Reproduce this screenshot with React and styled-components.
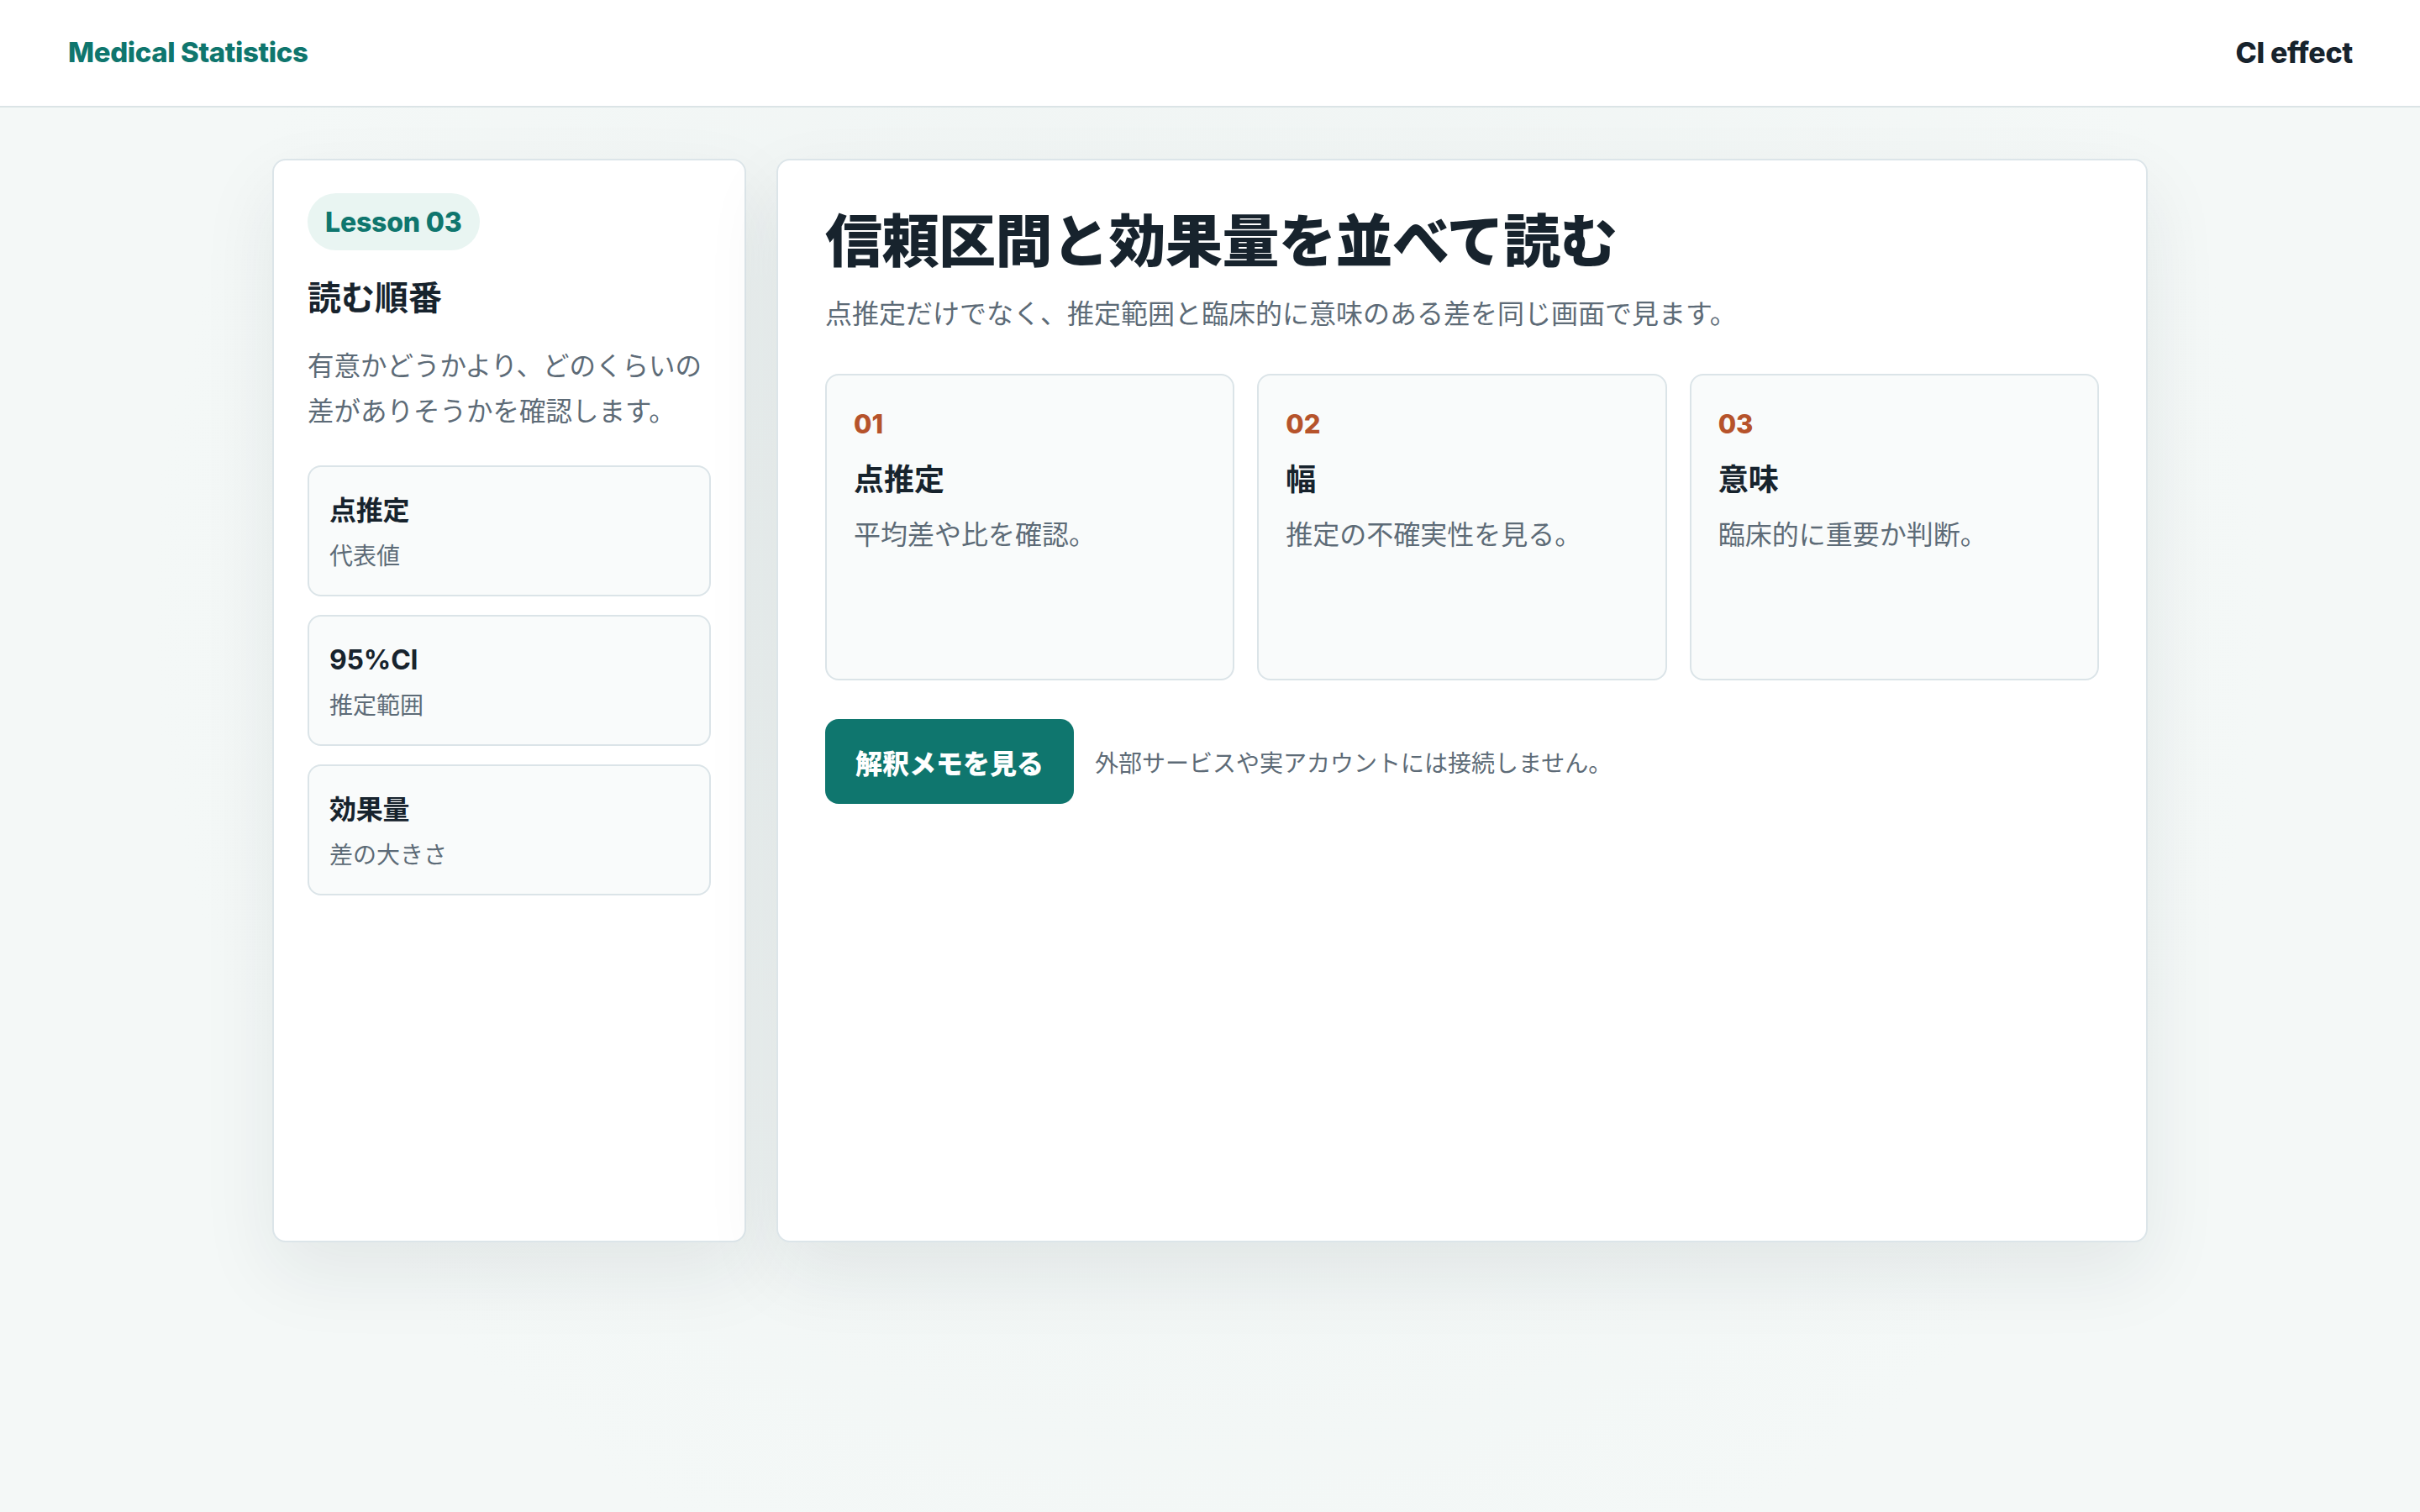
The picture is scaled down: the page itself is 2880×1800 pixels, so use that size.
import React from "react";
import styled, { createGlobalStyle } from "styled-components";

const GlobalStyle = createGlobalStyle`
  * {
    box-sizing: border-box;
  }
  body {
    margin: 0;
    background: #f4f8f7;
    color: #17232d;
    font-family: Inter, "Noto Sans CJK JP", sans-serif;
  }
`;

const Page = styled.div`
  min-height: 1800px;
  background: radial-gradient(circle at 50% 40%, #eef3f2 0%, #f4f8f7 70%);
`;

const Header = styled.header`
  height: 128px;
  display: flex;
  align-items: center;
  justify-content: space-between;
  padding: 0 80px 2px 81px;
  background: #ffffff;
  border-bottom: 2px solid #dbe4e6;
`;

const Brand = styled.div`
  font-size: 33px;
  font-weight: 800;
  color: #0f766e;
  letter-spacing: -0.4px;
`;

const HeaderTag = styled.div`
  font-size: 34px;
  font-weight: 800;
  color: #17232d;
  letter-spacing: -0.3px;
`;

const Layout = styled.main`
  max-width: 2232px;
  margin: 0 auto;
  padding-top: 61px;
  display: grid;
  grid-template-columns: 564px 1fr;
  gap: 36px;
`;

const Panel = styled.section`
  min-height: 1290px;
  background: #ffffff;
  border: 2px solid #dce5e9;
  border-radius: 16px;
  box-shadow: 0 36px 90px rgba(22, 40, 50, 0.08);
  padding: ${(p) => p.$pad};
`;

const Badge = styled.span`
  display: inline-flex;
  align-items: center;
  height: 68px;
  padding: 0 21px;
  border-radius: 34px;
  background: #e9f5f2;
  color: #0f766e;
  font-size: 32px;
  font-weight: 800;
  letter-spacing: -0.2px;
`;

const SideTitle = styled.h2`
  margin: 31px 0 0;
  font-size: 40px;
  line-height: 52px;
  font-weight: 700;
`;

const SideText = styled.p`
  margin: 28px 0 0;
  font-size: 31.5px;
  line-height: 54px;
  color: #5d6b77;
`;

const StackList = styled.div`
  margin-top: 37px;
  display: flex;
  flex-direction: column;
  gap: 22px;
`;

const StackItem = styled.div`
  min-height: 156px;
  padding: 28px 24px 20px 24px;
  border: 2px solid #dbe4e8;
  border-radius: 16px;
  background: #f9fbfb;
`;

const ItemTitle = styled.div`
  font-size: 32px;
  line-height: 48px;
  font-weight: 700;
  letter-spacing: -0.2px;
`;

const ItemSub = styled.div`
  margin-top: 9px;
  font-size: 28px;
  line-height: 42px;
  color: #5d6b77;
`;

const MainTitle = styled.h1`
  margin: 0;
  font-size: 68px;
  line-height: 85px;
  font-weight: 800;
  letter-spacing: -0.5px;
`;

const Lead = styled.p`
  margin: 17px 0 0;
  font-size: 32px;
  line-height: 54px;
  color: #5d6b77;
`;

const StepGrid = styled.div`
  margin-top: 44px;
  display: grid;
  grid-template-columns: repeat(3, 1fr);
  gap: 27px;
`;

const StepCard = styled.div`
  min-height: 365px;
  padding: 35px 32px 32px;
  border: 2px solid #dbe4e8;
  border-radius: 16px;
  background: #f9fbfb;
`;

const StepNum = styled.div`
  font-size: 31px;
  line-height: 45px;
  font-weight: 800;
  color: #b6532b;
`;

const StepTitle = styled.div`
  margin-top: 19px;
  font-size: 36px;
  line-height: 50px;
  font-weight: 700;
`;

const StepText = styled.div`
  margin-top: 15px;
  font-size: 32px;
  line-height: 51px;
  color: #5d6b77;
`;

const Actions = styled.div`
  margin-top: 46px;
  display: flex;
  align-items: center;
  gap: 25px;
`;

const Button = styled.button`
  height: 101px;
  padding: 0 36px;
  border: none;
  border-radius: 16px;
  background: #0f766e;
  color: #ffffff;
  font-family: inherit;
  font-size: 32px;
  font-weight: 800;
  cursor: pointer;
`;

const Note = styled.span`
  font-size: 28px;
  color: #5d6b77;
`;

const order = [
  { title: "点推定", sub: "代表値" },
  { title: "95%CI", sub: "推定範囲" },
  { title: "効果量", sub: "差の大きさ" },
];

const steps = [
  { num: "01", title: "点推定", text: "平均差や比を確認。" },
  { num: "02", title: "幅", text: "推定の不確実性を見る。" },
  { num: "03", title: "意味", text: "臨床的に重要か判断。" },
];

export default function App() {
  return (
    <Page>
      <GlobalStyle />
      <Header>
        <Brand>Medical Statistics</Brand>
        <HeaderTag>CI effect</HeaderTag>
      </Header>
      <Layout>
        <Panel $pad="39px 40px">
          <Badge>Lesson 03</Badge>
          <SideTitle>読む順番</SideTitle>
          <SideText>有意かどうかより、どのくらいの差がありそうかを確認します。</SideText>
          <StackList>
            {order.map((o) => (
              <StackItem key={o.title}>
                <ItemTitle>{o.title}</ItemTitle>
                <ItemSub>{o.sub}</ItemSub>
              </StackItem>
            ))}
          </StackList>
        </Panel>
        <Panel $pad="54px 56px">
          <MainTitle>信頼区間と効果量を並べて読む</MainTitle>
          <Lead>点推定だけでなく、推定範囲と臨床的に意味のある差を同じ画面で見ます。</Lead>
          <StepGrid>
            {steps.map((s) => (
              <StepCard key={s.num}>
                <StepNum>{s.num}</StepNum>
                <StepTitle>{s.title}</StepTitle>
                <StepText>{s.text}</StepText>
              </StepCard>
            ))}
          </StepGrid>
          <Actions>
            <Button>解釈メモを見る</Button>
            <Note>外部サービスや実アカウントには接続しません。</Note>
          </Actions>
        </Panel>
      </Layout>
    </Page>
  );
}
